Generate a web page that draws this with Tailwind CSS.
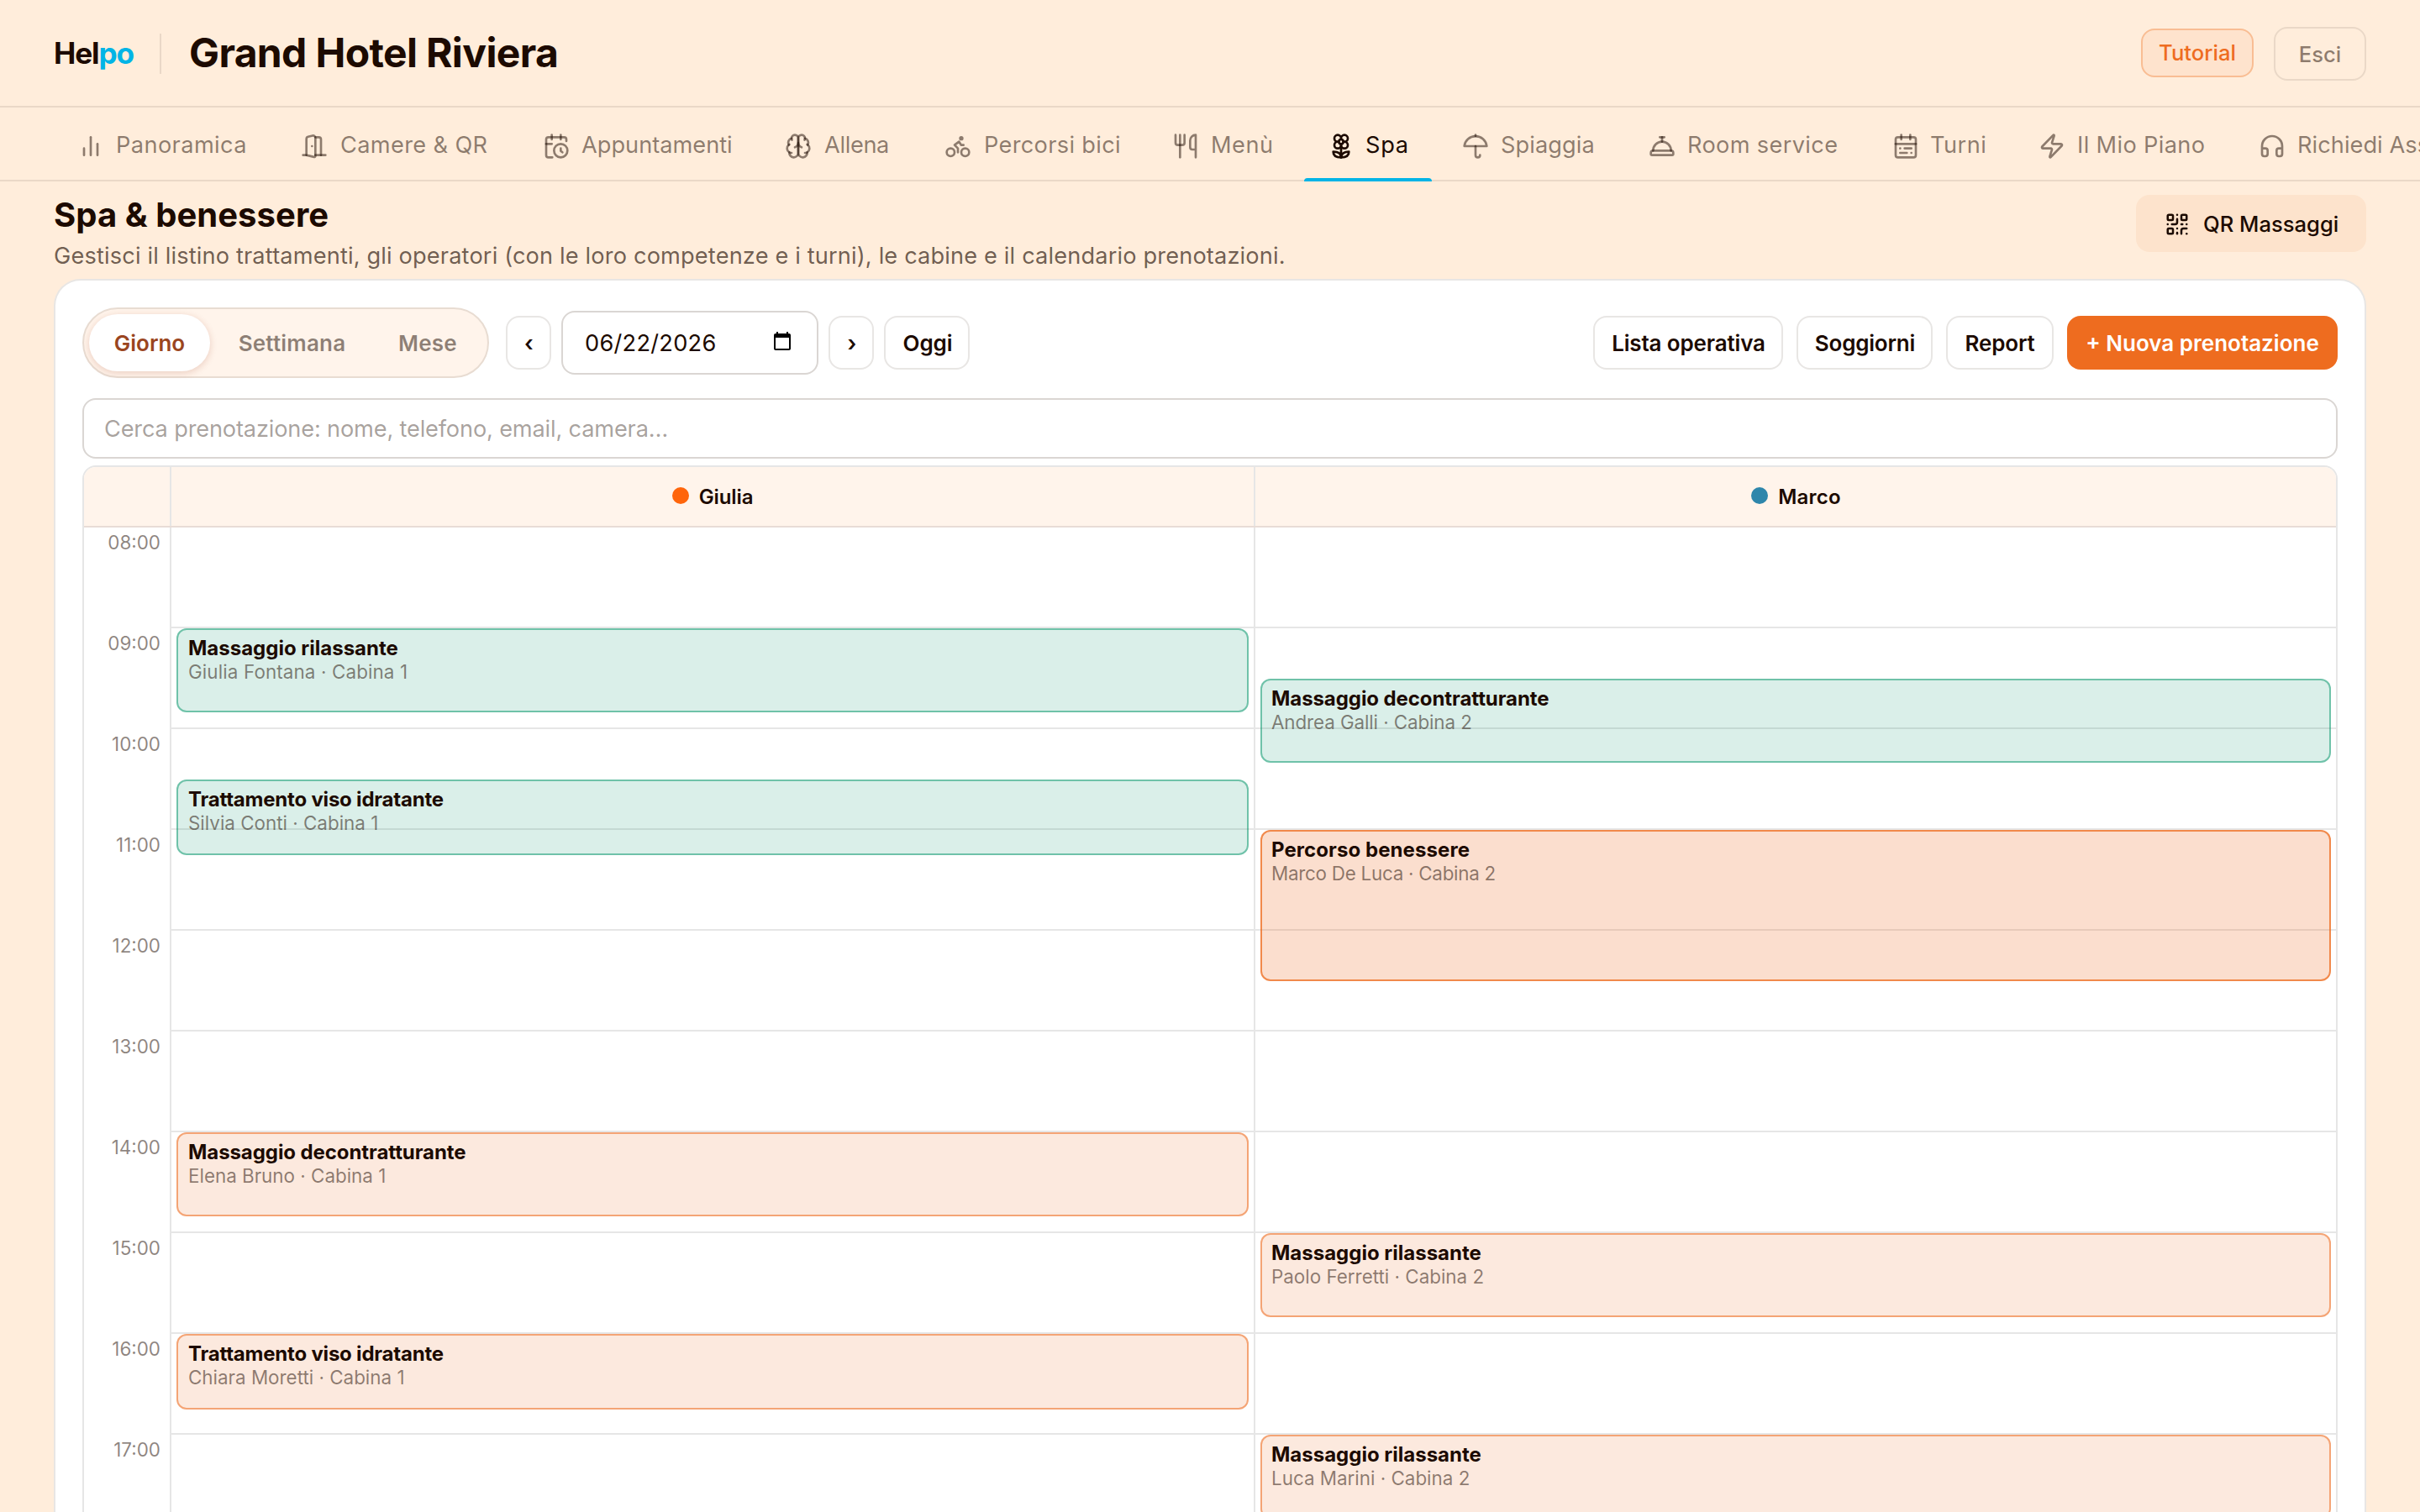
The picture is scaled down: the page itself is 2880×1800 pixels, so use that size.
<!DOCTYPE html>
<html lang="it">
<head>
  <meta charset="UTF-8">
  <title>Helpo - Grand Hotel Riviera</title>
  <meta name="viewport" content="width=device-width, initial-scale=1.0">
  <script src="https://cdn.jsdelivr.net/npm/@tailwindcss/browser@4"></script>
</head>
<body class="h-[1800px] overflow-hidden bg-[#ffeddb] font-[Inter,sans-serif] text-[#1c0a00]">
  <div id="page" class="flex h-full flex-col">

    <header class="flex h-32 shrink-0 items-start justify-between border-b-2 border-[#ead8c7] px-16 pt-8">
      <div class="flex h-16 items-center">
        <span class="w-24 text-[35.2px] leading-none font-bold tracking-[-1.12px]">Hel<span class="text-[#00b4e6]">po</span></span>
        <span class="ml-[30px] h-12 w-0.5 bg-[#ead8c7]"></span>
        <h1 class="ml-[33px] pb-0.5 text-5xl leading-none font-bold tracking-[-0.64px]">Grand Hotel Riviera</h1>
      </div>
      <div class="flex items-start gap-6">
        <button class="mt-0.5 h-[58px] w-[134px] rounded-2xl border-2 border-[#f9bd93] bg-[#fee3cd] text-[25.6px] font-medium text-[#ee6c1f]">Tutorial</button>
        <button class="h-16 w-[110px] rounded-2xl border-2 border-[#ead8c7] pt-0.5 text-[25.6px] font-medium text-[#1c0a00]/50">Esci</button>
      </div>
    </header>

    <nav class="h-[88px] shrink-0 border-b-2 border-[#ead8c7] pl-16 text-[27.2px] whitespace-nowrap text-[#1c0a00]/50 [&_span]:mt-0.5 [&_svg]:mt-1 [&_svg]:size-8 [&_svg]:shrink-0 [&_svg]:fill-none [&_svg]:stroke-current [&_svg]:stroke-2">
      <div class="flex h-[88px] gap-2 overflow-hidden [&>a]:flex [&>a]:shrink-0 [&>a]:items-center [&>a]:gap-3.5 [&>a]:pl-7">
        <a class="w-[258px]"><svg viewBox="0 0 24 24" stroke-linecap="round" stroke-linejoin="round"><path d="M18 20V10"/><path d="M12 20V4"/><path d="M6 20v-6"/></svg><span class="tracking-[0.4px]">Panoramica</span></a>
        <a class="w-[280px]"><svg viewBox="0 0 24 24" stroke-linecap="round" stroke-linejoin="round"><path d="M13 4h3a2 2 0 0 1 2 2v14"/><path d="M2 20h3"/><path d="M13 20h9"/><path d="M10 12v.01"/><path d="M13 4.562v16.157a1 1 0 0 1-1.242.97L5 20V5.562a2 2 0 0 1 1.515-1.94l4-1A2 2 0 0 1 13 4.561Z"/></svg><span class="pl-px tracking-[0.35px]">Camere &amp; QR</span></a>
        <a class="w-[280px]"><svg viewBox="0 0 24 24" stroke-linecap="round" stroke-linejoin="round"><path d="M21 7.5V6a2 2 0 0 0-2-2H5a2 2 0 0 0-2 2v14a2 2 0 0 0 2 2h3.5"/><path d="M16 2v4"/><path d="M8 2v4"/><path d="M3 10h5"/><path d="M17.5 17.5 16 16.3V14"/><circle cx="16" cy="16" r="6"/></svg><span>Appuntamenti</span></a>
        <a class="w-[182px]"><svg viewBox="0 0 24 24" stroke-linecap="round" stroke-linejoin="round"><path d="M12 5a3 3 0 1 0-5.997.125 4 4 0 0 0-2.526 5.77 4 4 0 0 0 .556 6.588A4 4 0 1 0 12 18Z"/><path d="M12 5a3 3 0 1 1 5.997.125 4 4 0 0 1 2.526 5.77 4 4 0 0 1-.556 6.588A4 4 0 1 1 12 18Z"/><path d="M15 13a4.5 4.5 0 0 1-3-4 4.5 4.5 0 0 1-3 4"/><path d="M17.599 6.5a3 3 0 0 0 .399-1.375"/><path d="M6.003 5.125A3 3 0 0 0 6.401 6.5"/><path d="M3.477 10.896a4 4 0 0 1 .585-.396"/><path d="M19.938 10.5a4 4 0 0 1 .585.396"/><path d="M6 18a4 4 0 0 1-1.967-.516"/><path d="M19.967 17.484A4 4 0 0 1 18 18"/></svg><span class="pl-px tracking-[-0.35px]">Allena</span></a>
        <a class="w-[263px]"><svg viewBox="0 0 24 24" stroke-linecap="round" stroke-linejoin="round"><circle cx="18.5" cy="17.5" r="3.5"/><circle cx="5.5" cy="17.5" r="3.5"/><circle cx="15" cy="5" r="1"/><path d="M12 17.5V14l-3-3 4-3 2 3h2"/></svg><span class="pl-px tracking-[0.31px]">Percorsi bici</span></a>
        <a class="w-[177px]"><svg viewBox="0 0 24 24" stroke-linecap="round" stroke-linejoin="round"><path d="M3 2v7c0 1.1.9 2 2 2h4a2 2 0 0 0 2-2V2"/><path d="M7 2v20"/><path d="M21 15V2a5 5 0 0 0-5 5v6c0 1.1.9 2 2 2h3Zm0 0v7"/></svg><span class="tracking-[0.5px]">Menù</span></a>
        <a class="relative w-[152px] text-[#1c0a00]"><svg viewBox="0 0 24 24" stroke-linecap="round" stroke-linejoin="round"><path d="M12 5a3 3 0 1 1 3 3m-3-3a3 3 0 1 0-3 3m3-3v1M9 8a3 3 0 1 0 3 3M9 8h1m5 0a3 3 0 1 1-3 3m3-3h-1m-2 3v-1"/><circle cx="12" cy="8" r="2"/><path d="M12 10v12"/><path d="M12 22c4.2 0 7-1.667 7-5-4.2 0-7 1.667-7 5Z"/><path d="M12 22c-4.2 0-7-1.667-7-5 4.2 0 7 1.667 7 5Z"/></svg><span class="-ml-px tracking-[0.7px]">Spa</span><i class="absolute inset-x-0 bottom-0 h-1 rounded-t bg-[#00b4e6]"></i></a>
        <a class="w-[214px]"><svg viewBox="0 0 24 24" stroke-linecap="round" stroke-linejoin="round"><path d="M22 12a10.06 10.06 1 0 0-20 0Z"/><path d="M12 12v8a2 2 0 0 0 4 0"/><path d="M12 2v1"/></svg><span class="tracking-[0.09px]">Spiaggia</span></a>
        <a class="w-[282px]"><svg viewBox="0 0 24 24" stroke-linecap="round" stroke-linejoin="round"><path d="M3 20a1 1 0 0 1-1-1v-1a2 2 0 0 1 2-2h16a2 2 0 0 1 2 2v1a1 1 0 0 1-1 1Z"/><path d="M20 16a8 8 0 1 0-16 0"/><path d="M12 4v4"/><path d="M10 4h4"/></svg><span class="tracking-[0.34px]">Room service</span></a>
        <a class="w-[166px]"><svg viewBox="0 0 24 24" stroke-linecap="round" stroke-linejoin="round"><rect width="18" height="18" x="3" y="4" rx="2"/><path d="M16 2v4"/><path d="M3 10h18"/><path d="M8 2v4"/><path d="M17 14h-6"/><path d="M13 18H7"/><path d="M7 14h.01"/><path d="M17 18h.01"/></svg><span class="-ml-px tracking-[0.5px]">Turni</span></a>
        <a class="w-[254px]"><svg viewBox="0 0 24 24" stroke-linecap="round" stroke-linejoin="round"><path d="M4 14a1 1 0 0 1-.78-1.63l9.9-10.2a.5.5 0 0 1 .86.46l-1.92 6.02A1 1 0 0 0 13 10h7a1 1 0 0 1 .78 1.63l-9.9 10.2a.5.5 0 0 1-.86-.46l1.92-6.02A1 1 0 0 0 11 14z"/></svg><span class="tracking-[0.34px]">Il Mio Piano</span></a>
        <a><svg viewBox="0 0 24 24" stroke-linecap="round" stroke-linejoin="round"><path d="M3 14h3a2 2 0 0 1 2 2v3a2 2 0 0 1-2 2H5a2 2 0 0 1-2-2v-7a9 9 0 0 1 18 0v7a2 2 0 0 1-2 2h-1a2 2 0 0 1-2-2v-3a2 2 0 0 1 2-2h3"/></svg><span class="tracking-[0.05px]">Richiedi Assistenza</span></a>
      </div>
    </nav>

    <div class="mx-16 flex h-[116px] shrink-0 justify-between pt-4">
      <div>
        <h2 class="mt-[-2px] text-[40px] leading-[52px] font-bold tracking-[0.05px]">Spa &amp; benessere</h2>
        <p class="text-[27.2px] leading-[46px] tracking-[0.15px] text-[#1c0a00]/65">Gestisci il listino trattamenti, gli operatori (con le loro competenze e i turni), le cabine e il calendario prenotazioni.</p>
      </div>
      <button class="flex h-[68px] w-[274px] items-center gap-4 rounded-2xl bg-[#fde3cc] pl-[34px] text-[25.6px] font-medium">
        <svg class="mt-0.5 size-[30px] fill-none stroke-current stroke-2" viewBox="0 0 24 24" stroke-linecap="round" stroke-linejoin="round"><rect width="5" height="5" x="3" y="3" rx="1"/><rect width="5" height="5" x="16" y="3" rx="1"/><rect width="5" height="5" x="3" y="16" rx="1"/><path d="M21 16h-3a2 2 0 0 0-2 2v3"/><path d="M21 21v.01"/><path d="M12 7v3a2 2 0 0 1-2 2H7"/><path d="M3 12h.01"/><path d="M12 3h.01"/><path d="M12 16v.01"/><path d="M16 12h1"/><path d="M21 12v.01"/><path d="M12 21v-1"/></svg>
        <span class="pt-0.5">QR Massaggi</span>
      </button>
    </div>

    <main class="mx-16 flex flex-col rounded-t-[32px] border-2 border-b-0 border-[#e8e6e4] bg-white px-8 pt-8">
      <!-- toolbar -->
      <div class="flex items-center justify-between text-[26px] font-semibold">
        <div class="flex items-center gap-3">
          <div class="mr-2 flex h-[84px] w-[484px] gap-0.5 rounded-full border-2 border-[#e8dcd2] bg-[#fff4eb] p-1.5 text-[#1c0a00]/50">
            <button class="w-[144px] rounded-full bg-white text-[#9a4520] shadow-[0_2px_8px_rgba(154,52,18,0.2)]">Giorno</button>
            <button class="w-[190px] pl-px tracking-[0.2px]">Settimana</button>
            <button class="flex-1 tracking-[0.2px]">Mese</button>
          </div>
          <button class="h-16 w-[54px] rounded-2xl border-2 border-[#e8e6e4] pl-px">‹</button>
          <div class="flex h-[76px] w-[306px] items-center justify-between rounded-2xl border-2 border-[#dad6d3] pr-[29px] pl-[26px] text-[27.2px] font-normal">
            <span class="mt-0.5 tracking-[0.26px]">06/22/2026</span>
            <svg class="mb-1 size-6 fill-black" viewBox="0 0 24 24"><path d="M20 3h-1V1h-2v2H7V1H5v2H4c-1.1 0-2 .9-2 2v16c0 1.1.9 2 2 2h16c1.1 0 2-.9 2-2V5c0-1.1-.9-2-2-2zm0 18H4V8h16v13z"/></svg>
          </div>
          <button class="h-16 w-[54px] rounded-2xl border-2 border-[#e8e6e4] pl-0.5">›</button>
          <button class="h-16 w-[102px] rounded-2xl border-2 border-[#e8e6e4] pl-0.5 tracking-[-0.1px]">Oggi</button>
        </div>
        <div class="flex gap-4">
          <button class="h-16 w-[226px] rounded-2xl border-2 border-[#e8e6e4] pl-px tracking-[-0.15px]">Lista operativa</button>
          <button class="h-16 w-[162px] rounded-2xl border-2 border-[#e8e6e4] pl-px tracking-[-0.2px]">Soggiorni</button>
          <button class="h-16 w-[128px] rounded-2xl border-2 border-[#e8e6e4] tracking-[-0.15px]">Report</button>
          <button class="h-16 w-[322px] rounded-2xl bg-[#ee6c1f] text-white">+ Nuova prenotazione</button>
        </div>
      </div>

      <div class="mt-6 flex h-[72px] items-center rounded-2xl border-2 border-[#dad6d3] px-6 pt-0.5 text-[27.2px] tracking-[-0.17px] text-[#1c0a00]/40">Cerca prenotazione: nome, telefono, email, camera…</div>

      <!-- day calendar -->
      <div class="mt-2 overflow-hidden rounded-t-2xl border-2 border-b-0 border-[#e6e6e6]">
        <div class="grid h-[72px] grid-cols-[102px_1290px_1fr] border-b-2 border-[#e8dcd6] bg-[#fff4eb] text-2xl font-semibold">
          <div></div>
          <div class="flex items-center justify-center gap-3 border-l-2 border-[#e6e6e6]"><i class="mb-0.5 size-5 rounded-full bg-[#ff650b]"></i><span class="pt-0.5 tracking-[-0.1px]">Giulia</span></div>
          <div class="flex items-center justify-center gap-3 border-l-2 border-[#e6e6e6] pl-px"><i class="mb-0.5 size-5 rounded-full bg-[#2e86ab]"></i><span class="pt-0.5 tracking-[0.2px]">Marco</span></div>
        </div>
        <div class="grid grid-cols-[102px_1290px_1fr]">
          <div class="pr-[11px] text-right text-[22.4px] leading-[36px] text-[#1c0a00]/50 [&>div]:h-[120px]">
            <div>08:00</div>
            <div>09:00</div>
            <div>10:00</div>
            <div>11:00</div>
            <div>12:00</div>
            <div>13:00</div>
            <div>14:00</div>
            <div>15:00</div>
            <div>16:00</div>
            <div>17:00</div>
          </div>
          <div class="day relative border-l-2 border-[#e6e6e6] [&_b]:pl-px [&_p]:pl-px"></div>
          <div class="day relative border-l-2 border-[#e6e6e6]"></div>
        </div>
      </div>
    </main>
  </div>

  <script>
    // start and length are minutes, 2px per minute, the grid opens at 08:00
    const styles = {
      done: 'border-[#059669]/50 bg-[#059669]/15',
      booked: 'border-[#ee6c1f]/55 bg-[#ee6c1f]/15',
      active: 'border-[#ee6c1f]/75 bg-[#ea580c]/20',
    };
    const events = [
      [
        [60, 50, 'done', 'Massaggio rilassante', 'Giulia Fontana · Cabina 1', '', 'tracking-[0.12px]'],
        [150, 45, 'done', 'Trattamento viso idratante', 'Silvia Conti · Cabina 1', 'tracking-[-0.21px]', ''],
        [360, 50, 'booked', 'Massaggio decontratturante', 'Elena Bruno · Cabina 1', 'tracking-[-0.08px]', ''],
        [480, 45, 'booked', 'Trattamento viso idratante', 'Chiara Moretti · Cabina 1', 'tracking-[-0.21px]', ''],
      ],
      [
        [90, 50, 'done', 'Massaggio decontratturante', 'Andrea Galli · Cabina 2', 'tracking-[-0.08px]', 'tracking-[-0.1px]'],
        [180, 90, 'active', 'Percorso benessere', 'Marco De Luca · Cabina 2', 'tracking-[0.08px]', 'tracking-[-0.26px]'],
        [420, 50, 'booked', 'Massaggio rilassante', 'Paolo Ferretti · Cabina 2', '', ''],
        [540, 50, 'booked', 'Massaggio rilassante', 'Luca Marini · Cabina 2', '', ''],
      ],
    ];
    document.querySelectorAll('.day').forEach((day, i) => {
      day.innerHTML = '<div class="h-[120px] border-b-2 border-[#e6e6e6]"></div>'.repeat(10) +
        events[i].map(([start, len, kind, title, who, titleFit, whoFit]) => `
          <div class="absolute inset-x-1.5 overflow-hidden rounded-xl border-2 px-[11px] pt-1.5 ${styles[kind]}" style="top:${start * 2}px;height:${len * 2}px">
            <b class="block text-2xl leading-[31px] font-bold ${titleFit}">${title}</b>
            <p class="text-[22.4px] leading-[26px] text-[#1c0a00]/50 ${whoFit}">${who}</p>
          </div>`).join('');
    });
  </script>
</body>
</html>
